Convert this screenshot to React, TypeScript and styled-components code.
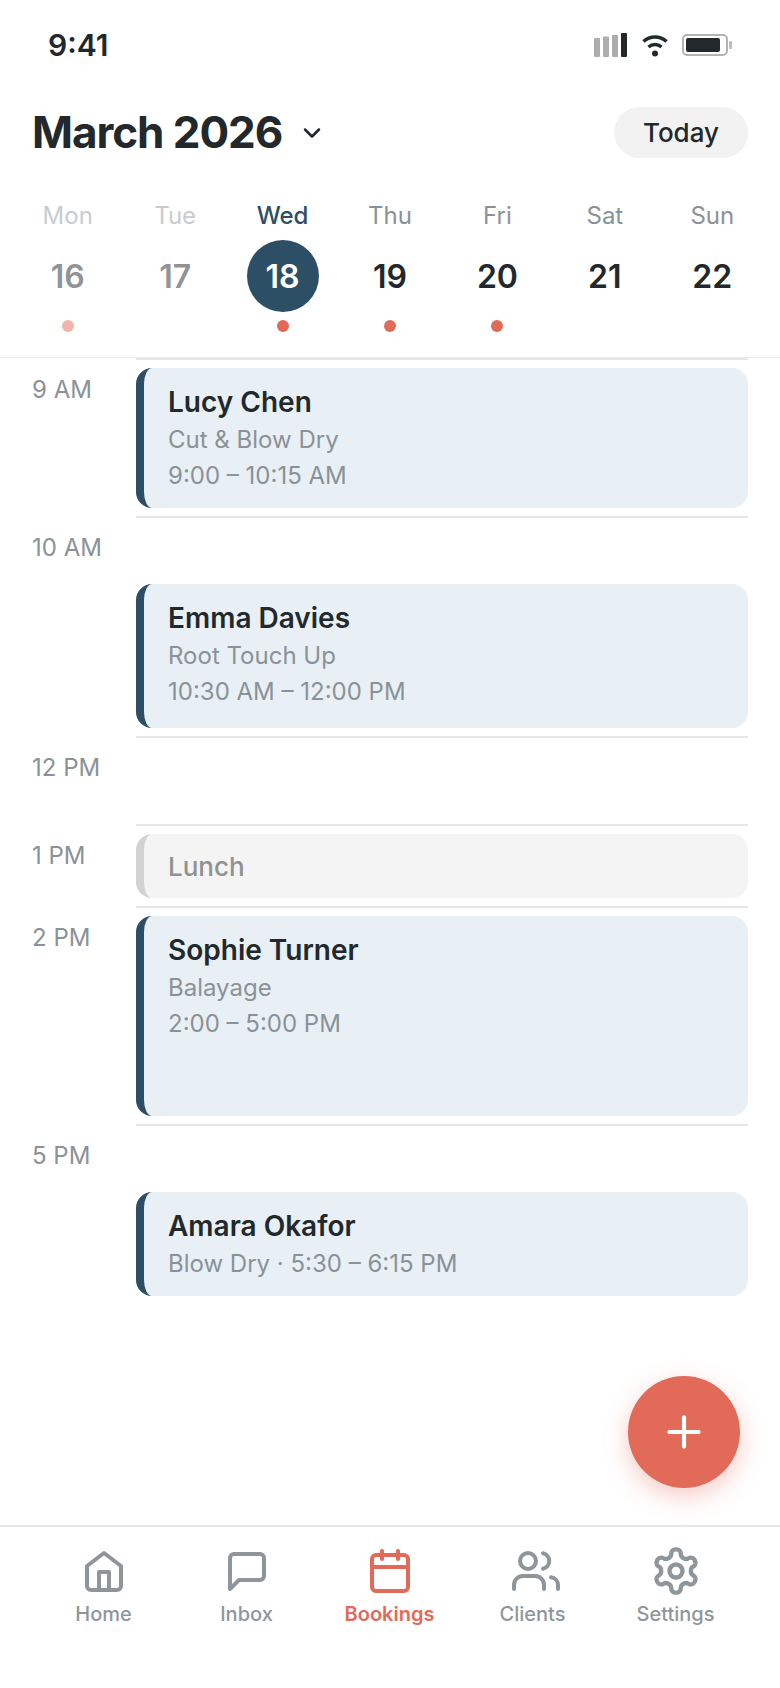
import React from 'react';
import styled, { createGlobalStyle } from 'styled-components';
import { Calendar, ChevronDown, Plus } from 'lucide-react';

const GlobalStyle = createGlobalStyle`
  html, body {
    margin: 0;
    padding: 0;
    background: #fff;
  }
  * {
    box-sizing: border-box;
  }
`;

const INK = '#22282b';
const NAVY = '#2c4f65';
const GREY = '#8a9298';
const CORAL = '#e26a58';

const Screen = styled.div`
  position: relative;
  display: flex;
  flex-direction: column;
  width: 780px;
  height: 1688px;
  overflow: hidden;
  background: #fff;
  color: ${INK};
  font-family: Inter, 'Liberation Sans', sans-serif;
`;

const StatusBar = styled.div`
  display: flex;
  align-items: center;
  justify-content: space-between;
  height: 90px;
  padding: 0 48px;
`;

const Clock = styled.span`
  font-size: 30px;
  font-weight: 600;
`;

const StatusIcons = styled.div`
  display: flex;
  align-items: center;
  gap: 14px;
  margin-right: -1px;
`;

const TitleRow = styled.div`
  display: flex;
  align-items: center;
  justify-content: space-between;
  margin-top: 17px;
  padding: 0 32px;
`;

const MonthPicker = styled.div`
  display: flex;
  align-items: center;
  gap: 16px;
`;

const Month = styled.h1`
  margin: 0;
  font-size: 44px;
  line-height: 51px;
  font-weight: 700;
  letter-spacing: -1.06px;
`;

const TodayButton = styled.button`
  width: 134px;
  height: 51px;
  padding: 0;
  border: 0;
  border-radius: 26px;
  background: #f2f2f2;
  color: ${INK};
  font-family: inherit;
  font-size: 26px;
  font-weight: 500;
`;

const Week = styled.div`
  display: grid;
  grid-template-columns: repeat(7, 1fr);
  margin-top: 43px;
  padding: 0 14px 25px;
  border-bottom: 1px solid #ececec;
`;

const Day = styled.div`
  display: flex;
  flex-direction: column;
  align-items: center;
`;

const DayName = styled.span<{ $past?: boolean; $active?: boolean }>`
  height: 30px;
  font-size: 24px;
  line-height: 30px;
  font-weight: ${(p) => (p.$active ? 500 : 400)};
  color: ${(p) => (p.$active ? NAVY : p.$past ? '#c9cccf' : GREY)};
`;

const DayNumber = styled.span<{ $past?: boolean; $active?: boolean }>`
  display: flex;
  align-items: center;
  justify-content: center;
  width: 72px;
  height: 72px;
  margin-top: 9px;
  border-radius: 50%;
  background: ${(p) => (p.$active ? NAVY : 'transparent')};
  color: ${(p) => (p.$active ? '#fff' : p.$past ? '#909496' : INK)};
  font-size: 32px;
  font-weight: 600;
`;

const DayDot = styled.span<{ $on?: boolean; $past?: boolean }>`
  width: 12px;
  height: 12px;
  margin-top: 8px;
  border-radius: 50%;
  background: ${(p) => (p.$on ? CORAL : 'transparent')};
  opacity: ${(p) => (p.$past ? 0.5 : 1)};
`;

const Schedule = styled.div`
  flex: 1;
  display: flex;
  flex-direction: column;
`;

const Slot = styled.div`
  display: grid;
  grid-template-columns: 136px 612px;
`;

const Hour = styled.span<{ $first?: boolean }>`
  padding: ${(p) => (p.$first ? 18 : 16)}px 0 0 32px;
  font-size: 24px;
  line-height: 28px;
  color: ${GREY};
  white-space: nowrap;
`;

const Track = styled.div<{ $first?: boolean; $last?: boolean; $height?: number; $gap?: number }>`
  ${(p) => (p.$height ? `height: ${p.$height}px;` : '')}
  padding: ${(p) => (p.$gap ?? 8)}px 0 8px;
  border-top: ${(p) => (p.$first ? '2px solid #e6e6e6' : '0')};
  border-bottom: ${(p) => (p.$last ? '0' : '2px solid #e6e6e6')};
`;

const Booking = styled.div<{ $height: number }>`
  height: ${(p) => p.$height}px;
  padding: 16px 24px;
  border-left: 8px solid ${NAVY};
  border-radius: 16px;
  background: #e8f0f5;
`;

const Client = styled.div`
  margin-bottom: 2px;
  font-size: 28px;
  line-height: 36px;
  font-weight: 600;
`;

const Detail = styled.div`
  font-size: 24px;
  line-height: 36px;
  color: ${GREY};
`;

const Break = styled.div`
  display: flex;
  align-items: center;
  height: 64px;
  padding-left: 24px;
  border-left: 8px solid #d2d2d2;
  border-radius: 16px;
  background: #f4f4f4;
  color: #919191;
  font-size: 26px;
  font-weight: 500;
`;

const AddButton = styled.button`
  position: absolute;
  left: 628px;
  top: 1376px;
  display: flex;
  align-items: center;
  justify-content: center;
  width: 112px;
  height: 112px;
  padding: 0;
  border: 0;
  border-radius: 50%;
  background: ${CORAL};
  color: #fff;
  box-shadow: 0 8px 24px rgba(226, 106, 88, 0.35);
`;

const TabBar = styled.nav`
  display: grid;
  grid-template-columns: repeat(5, 143px);
  height: 163px;
  padding: 20px 32px 0;
  border-top: 2px solid #e6e6e6;
`;

const Tab = styled.div<{ $active?: boolean }>`
  display: flex;
  flex-direction: column;
  align-items: center;
  gap: 7px;
  color: ${(p) => (p.$active ? CORAL : '#8f969b')};
  font-size: 20px;
  line-height: 24px;
  font-weight: ${(p) => (p.$active ? 600 : 500)};
`;

const SignalIcon = () => (
  <svg width="34" height="26" viewBox="0 0 34 26">
    <rect x="0" y="6" width="6" height="19" rx="1" fill="#adadad" />
    <rect x="9" y="4.5" width="6" height="20.5" rx="1" fill="#adadad" />
    <rect x="18" y="3" width="6" height="22" rx="1" fill="#adadad" />
    <rect x="27" y="1" width="6" height="24" rx="1" fill={INK} />
  </svg>
);

const WifiIcon = () => (
  <svg width="26" height="24" viewBox="0 0 26 24" fill="none" stroke={INK} strokeWidth="3.6">
    <path d="M1.5 8.5C8 2.5 18 2.5 24.5 8.5" />
    <path d="M6.5 14c3.8-3.4 9.2-3.4 13 0" />
    <circle cx="13" cy="20.5" r="3" fill={INK} stroke="none" />
  </svg>
);

const BatteryIcon = () => (
  <svg width="51" height="22" viewBox="0 0 51 22">
    <rect x="1" y="1" width="44" height="20" rx="4" fill="none" stroke="#b3b3b3" strokeWidth="2" />
    <rect x="4" y="4" width="34" height="14" rx="2" fill={INK} />
    <rect x="47" y="7" width="3" height="8" rx="1" fill="#bdbdbd" />
  </svg>
);

const TabIcon = styled.svg.attrs({
  viewBox: '0 0 24 24',
  fill: 'none',
  stroke: 'currentColor',
  strokeWidth: 2,
  strokeLinecap: 'round',
  strokeLinejoin: 'round',
})<{ $size?: number }>`
  width: ${(p) => p.$size ?? 48}px;
  height: ${(p) => p.$size ?? 48}px;
  margin: ${(p) => (48 - (p.$size ?? 48)) / 2}px 0;
  overflow: visible;
`;

const HomeIcon = () => (
  <TabIcon>
    <path d="M12 3l8.5 6.5v10a2 2 0 0 1-2 2h-13a2 2 0 0 1-2-2v-10z" />
    <path d="M9.5 21.5V12.5h5v9" />
  </TabIcon>
);

const InboxIcon = () => (
  <TabIcon>
    <path d="M20.5 14.5a2 2 0 0 1-2 2H8L3.5 21V5.5a2 2 0 0 1 2-2h13a2 2 0 0 1 2 2z" />
  </TabIcon>
);

const ClientsIcon = () => (
  <TabIcon>
    <circle cx="9.5" cy="7" r="4" />
    <path d="M17 3.1a4 4 0 0 1 0 7.8" />
    <path d="M2.5 21v-2A4.5 4.5 0 0 1 7 14.5h6a4.5 4.5 0 0 1 4.5 4.5v2" />
    <path d="M24.5 21v-2a4 4 0 0 0-3.5-3.9" />
  </TabIcon>
);

const SettingsIcon = () => (
  <TabIcon $size={52}>
    <path d="M12.22 2h-.44a2 2 0 0 0-2 2v.18a2 2 0 0 1-1 1.73l-.43.25a2 2 0 0 1-2 0l-.15-.08a2 2 0 0 0-2.73.73l-.22.38a2 2 0 0 0 .73 2.73l.15.1a2 2 0 0 1 1 1.72v.51a2 2 0 0 1-1 1.74l-.15.09a2 2 0 0 0-.73 2.73l.22.38a2 2 0 0 0 2.73.73l.15-.08a2 2 0 0 1 2 0l.43.25a2 2 0 0 1 1 1.73V20a2 2 0 0 0 2 2h.44a2 2 0 0 0 2-2v-.18a2 2 0 0 1 1-1.73l.43-.25a2 2 0 0 1 2 0l.15.08a2 2 0 0 0 2.73-.73l.22-.39a2 2 0 0 0-.73-2.73l-.15-.08a2 2 0 0 1-1-1.74v-.5a2 2 0 0 1 1-1.74l.15-.09a2 2 0 0 0 .73-2.73l-.22-.38a2 2 0 0 0-2.73-.73l-.15.08a2 2 0 0 1-2 0l-.43-.25a2 2 0 0 1-1-1.73V4a2 2 0 0 0-2-2z" />
    <circle cx="12" cy="12" r="3" />
  </TabIcon>
);

const days = [
  { name: 'Mon', date: 16, dot: true, past: true },
  { name: 'Tue', date: 17, dot: false, past: true },
  { name: 'Wed', date: 18, dot: true, active: true },
  { name: 'Thu', date: 19, dot: true },
  { name: 'Fri', date: 20, dot: true },
  { name: 'Sat', date: 21, dot: false },
  { name: 'Sun', date: 22, dot: false },
];

const tabs = [
  { label: 'Home', icon: <HomeIcon /> },
  { label: 'Inbox', icon: <InboxIcon /> },
  { label: 'Bookings', icon: <Calendar size={48} />, active: true },
  { label: 'Clients', icon: <ClientsIcon /> },
  { label: 'Settings', icon: <SettingsIcon /> },
];

const App = () => {
  return (
    <Screen>
      <GlobalStyle />
      <StatusBar>
        <Clock>9:41</Clock>
        <StatusIcons>
          <SignalIcon />
          <WifiIcon />
          <BatteryIcon />
        </StatusIcons>
      </StatusBar>
      <TitleRow>
        <MonthPicker>
          <Month>March 2026</Month>
          <ChevronDown size={28} strokeWidth={2.2} />
        </MonthPicker>
        <TodayButton>Today</TodayButton>
      </TitleRow>
      <Week>
        {days.map((d) => (
          <Day key={d.name}>
            <DayName $past={d.past} $active={d.active}>{d.name}</DayName>
            <DayNumber $past={d.past} $active={d.active}>{d.date}</DayNumber>
            <DayDot $on={d.dot} $past={d.past} />
          </Day>
        ))}
      </Week>
      <Schedule>
        <Slot>
          <Hour $first>9 AM</Hour>
          <Track $first>
            <Booking $height={140}>
              <Client>Lucy Chen</Client>
              <Detail>Cut &amp; Blow Dry</Detail>
              <Detail>9:00 – 10:15 AM</Detail>
            </Booking>
          </Track>
        </Slot>
        <Slot>
          <Hour>10 AM</Hour>
          <Track $gap={66}>
            <Booking $height={144}>
              <Client>Emma Davies</Client>
              <Detail>Root Touch Up</Detail>
              <Detail>10:30 AM – 12:00 PM</Detail>
            </Booking>
          </Track>
        </Slot>
        <Slot>
          <Hour>12 PM</Hour>
          <Track $height={88} />
        </Slot>
        <Slot>
          <Hour>1 PM</Hour>
          <Track>
            <Break>Lunch</Break>
          </Track>
        </Slot>
        <Slot>
          <Hour>2 PM</Hour>
          <Track>
            <Booking $height={200}>
              <Client>Sophie Turner</Client>
              <Detail>Balayage</Detail>
              <Detail>2:00 – 5:00 PM</Detail>
            </Booking>
          </Track>
        </Slot>
        <Slot>
          <Hour>5 PM</Hour>
          <Track $last $gap={66}>
            <Booking $height={104}>
              <Client>Amara Okafor</Client>
              <Detail>Blow Dry · 5:30 – 6:15 PM</Detail>
            </Booking>
          </Track>
        </Slot>
      </Schedule>
      <AddButton>
        <Plus size={50} />
      </AddButton>
      <TabBar>
        {tabs.map((t) => (
          <Tab key={t.label} $active={t.active}>
            {t.icon}
            {t.label}
          </Tab>
        ))}
      </TabBar>
    </Screen>
  );
};

export default App;
